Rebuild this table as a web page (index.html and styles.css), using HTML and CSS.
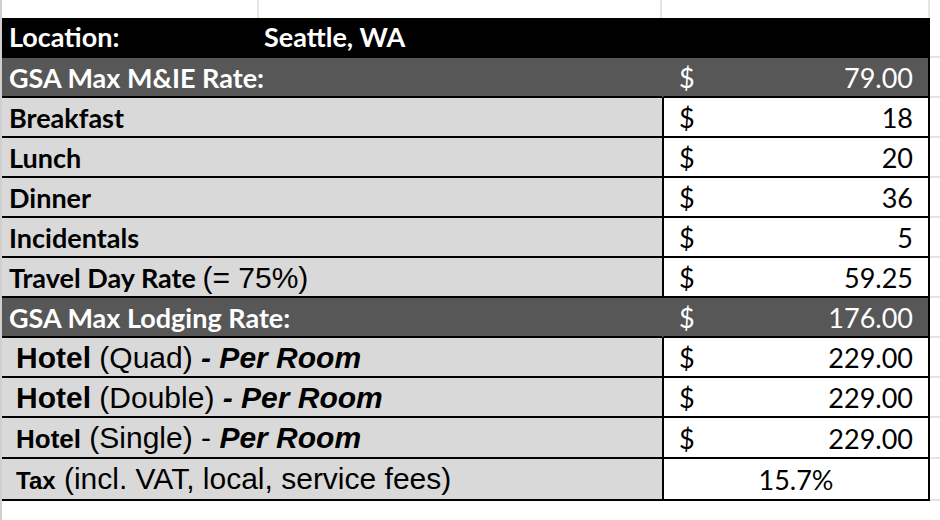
FILE: index.html
```html
<!DOCTYPE html>
<html>
<head>
<meta charset="utf-8">
<link rel="stylesheet" href="styles.css">
</head>
<body>
<div class="sheet">
  <table class="rates">
    <colgroup>
      <col class="col-a"><col class="col-b"><col class="col-c"><col class="col-d">
    </colgroup>
    <tr class="spacer">
      <td class="grid"></td><td class="grid"></td><td class="grid"></td><td></td>
    </tr>
    <tr class="row loc">
      <td class="lbl">Location:</td>
      <td class="lbl">Seattle, WA</td>
      <td class="val"></td>
      <td class="margin"></td>
    </tr>
    <tr class="row head">
      <td class="lbl" colspan="2">GSA Max M&amp;IE Rate:</td>
      <td class="val"><span class="cur">$</span><span class="num">79.00</span></td>
      <td class="margin"></td>
    </tr>
    <tr class="row">
      <td class="lbl" colspan="2">Breakfast</td>
      <td class="val"><span class="cur">$</span><span class="num">18</span></td>
      <td class="margin"></td>
    </tr>
    <tr class="row">
      <td class="lbl" colspan="2">Lunch</td>
      <td class="val"><span class="cur">$</span><span class="num">20</span></td>
      <td class="margin"></td>
    </tr>
    <tr class="row">
      <td class="lbl" colspan="2">Dinner</td>
      <td class="val"><span class="cur">$</span><span class="num">36</span></td>
      <td class="margin"></td>
    </tr>
    <tr class="row">
      <td class="lbl" colspan="2">Incidentals</td>
      <td class="val"><span class="cur">$</span><span class="num">5</span></td>
      <td class="margin"></td>
    </tr>
    <tr class="row">
      <td class="lbl" colspan="2">Travel Day Rate <span class="arial">(= 75%)</span></td>
      <td class="val"><span class="cur">$</span><span class="num">59.25</span></td>
      <td class="margin"></td>
    </tr>
    <tr class="row head">
      <td class="lbl" colspan="2">GSA Max Lodging Rate:</td>
      <td class="val"><span class="cur">$</span><span class="num">176.00</span></td>
      <td class="margin"></td>
    </tr>
    <tr class="row hotel">
      <td class="lbl" colspan="2"><b>Hotel</b> (Quad) <b><i>- Per Room</i></b></td>
      <td class="val"><span class="cur">$</span><span class="num">229.00</span></td>
      <td class="margin"></td>
    </tr>
    <tr class="row hotel">
      <td class="lbl" colspan="2"><b>Hotel</b> (Double) <b><i>- Per Room</i></b></td>
      <td class="val"><span class="cur">$</span><span class="num">229.00</span></td>
      <td class="margin"></td>
    </tr>
    <tr class="row hotel">
      <td class="lbl" colspan="2"><b class="small">Hotel</b> (Single) - <b><i>Per Room</i></b></td>
      <td class="val"><span class="cur">$</span><span class="num">229.00</span></td>
      <td class="margin"></td>
    </tr>
    <tr class="row hotel">
      <td class="lbl" colspan="2"><b class="tax">Tax</b> (incl. VAT, local, service fees)</td>
      <td class="val center"><span class="pct">15.7%</span></td>
      <td class="margin"></td>
    </tr>
  </table>
</div>
</body>
</html>
```

FILE: styles.css
```css
* { box-sizing: border-box; }
html, body { margin: 0; padding: 0; background: #fff; }
body { width: 940px; height: 520px; overflow: hidden; }

.sheet {
  border-left: 2px solid #cfcfcf;
  height: 520px;
}

.rates {
  border-collapse: separate;
  border-spacing: 0;
  table-layout: fixed;
  width: 938px;
  font-family: "Lato", "Liberation Sans", sans-serif;
  color: #000;
}
.col-a { width: 257px; }
.col-b { width: 403px; }
.col-c { width: 268px; }
.col-d { width: 10px; }

.rates td { padding: 0; }

.spacer td { height: 18px; }
.spacer td.grid { border-right: 2px solid #e6e6e6; }

.row td { height: 38px; border-bottom: 2px solid #000; }
.row.loc td { height: 40px; }
.row td.margin { border-bottom: 2px solid #e4e4e4; background: #fff; }

.lbl {
  background: #d9d9d9;
  font-weight: 700;
  font-size: 27px;
  padding-left: 7px !important;
  white-space: nowrap;
  line-height: 36px;
  padding-top: 2px !important;
}
.lbl .arial {
  font-family: "Liberation Sans", Arial, sans-serif;
  font-weight: 400;
  font-size: 30px;
}

.val {
  background: #fff;
  border-left: 2px solid #000;
  border-right: 2px solid #000;
  font-size: 27px;
  line-height: 36px;
  padding: 2px 15px 0 15px !important;
}
.val .cur { float: left; }
.val .num { float: right; }
.val.center { text-align: center; }
.val .pct { display: inline-block; }

.loc td.lbl, .loc td.val { background: #000; color: #fff; }
.loc td.lbl { line-height: 36px; padding-top: 0 !important; }
.loc td:nth-child(2) { padding-left: 5px !important; }

.head td.lbl, .head td.val { background: #575757; color: #fff; }
.head td.val { border-left-color: #575757; }

.hotel .lbl {
  font-family: "Liberation Sans", Arial, sans-serif;
  font-weight: 400;
  font-size: 30px;
  padding-left: 14px !important;
}
.hotel .lbl b { font-weight: 700; }
.hotel .lbl b.small { font-size: 26px; }
.hotel .lbl b.tax { font-size: 24px; }
.hotel .val { font-family: "Lato", sans-serif; }
```
